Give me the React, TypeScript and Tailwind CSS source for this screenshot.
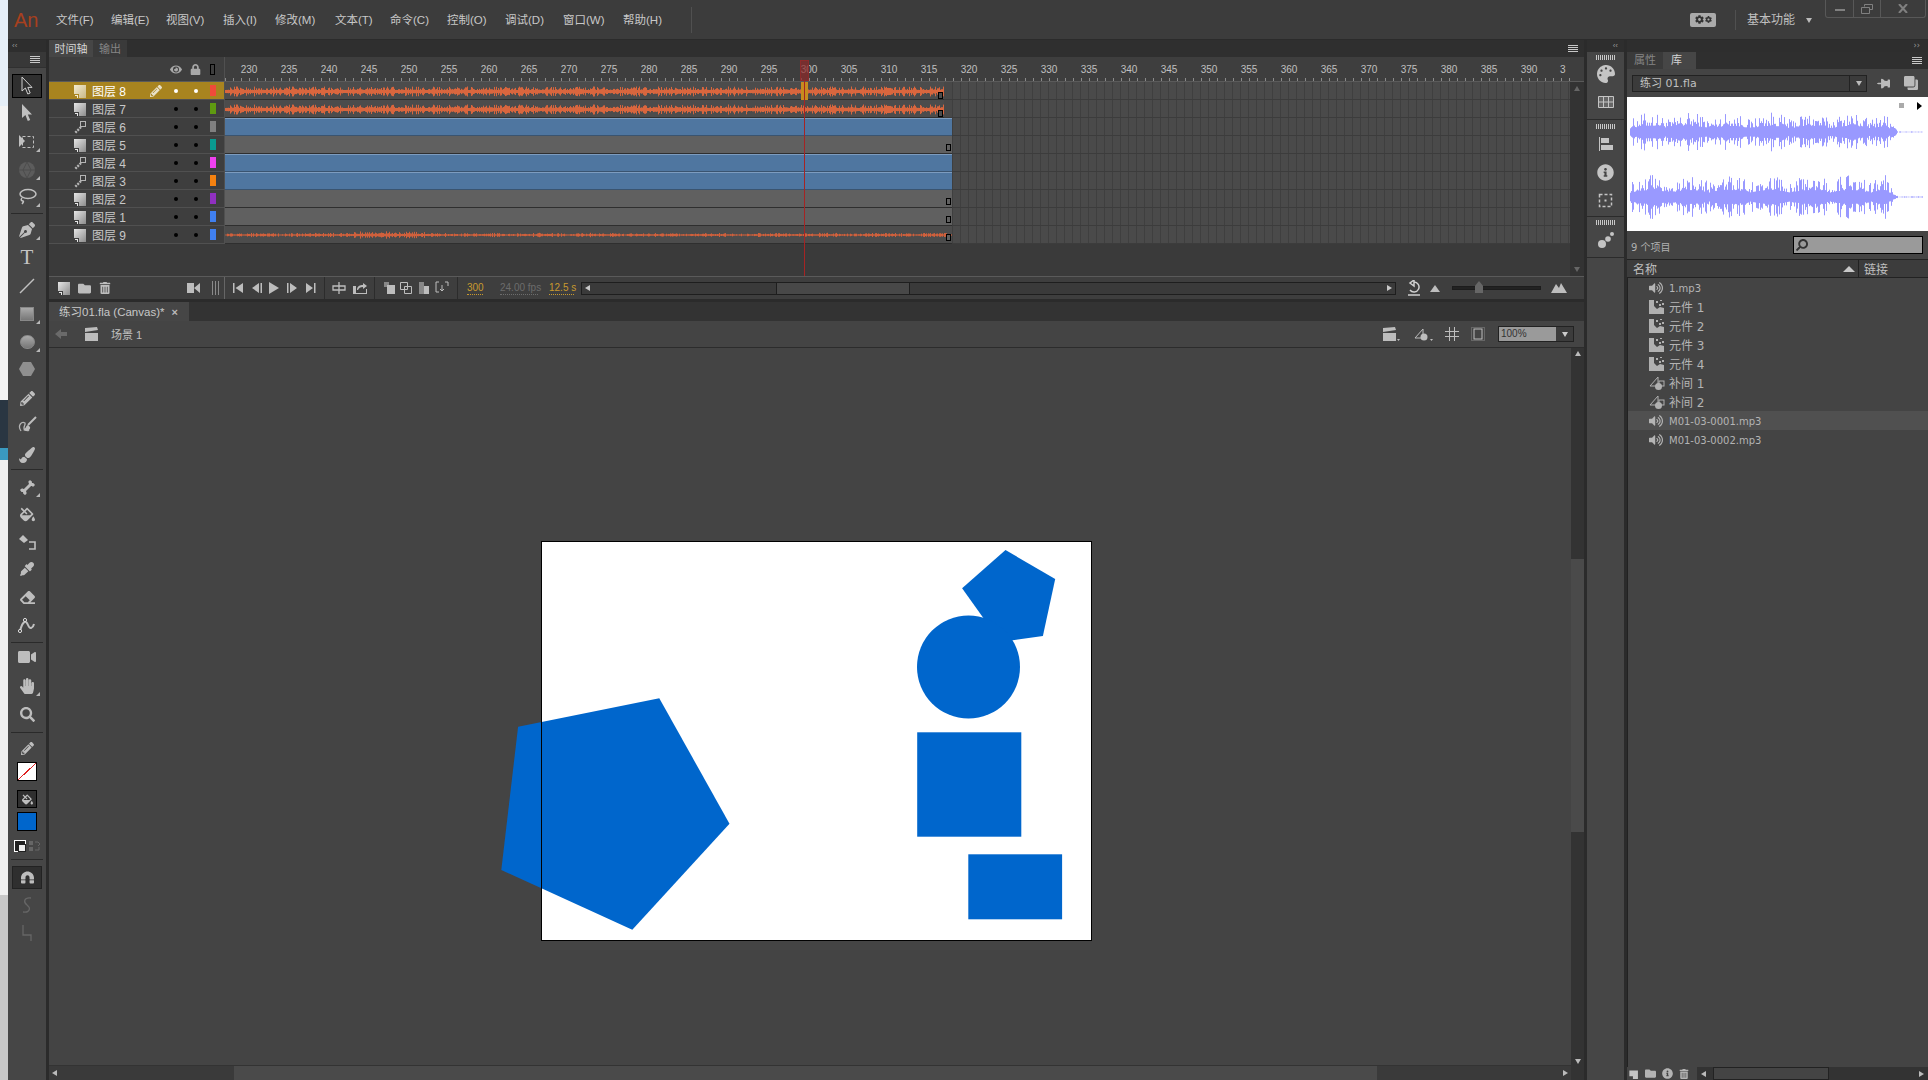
import type { ReactNode } from 'react';
import {
  FaBone,
  FaClone,
  FaCog,
  FaEraser,
  FaEye,
  FaEyeDropper,
  FaFillDrip,
  FaFolder,
  FaHandPaper,
  FaInfoCircle,
  FaLock,
  FaMagnet,
  FaPaintBrush,
  FaPalette,
  FaPenNib,
  FaPencilAlt,
  FaSearch,
  FaThumbtack,
  FaTrashAlt,
  FaVideo,
  FaVolumeUp,
} from 'react-icons/fa';

const MENUS = [
  ['文件(F)', 'w-[55px]'],
  ['编辑(E)', 'w-[55px]'],
  ['视图(V)', 'w-[57px]'],
  ['插入(I)', 'w-[52px]'],
  ['修改(M)', 'w-[60px]'],
  ['文本(T)', 'w-[55px]'],
  ['命令(C)', 'w-[57px]'],
  ['控制(O)', 'w-[58px]'],
  ['调试(D)', 'w-[58px]'],
  ['窗口(W)', 'w-[60px]'],
  ['帮助(H)', 'w-[55px]'],
];

const LAYERS = [
  { name: '图层 8', kind: 'layer', color: 'bg-[#f04a3a]', frames: 'wave', active: true },
  { name: '图层 7', kind: 'layer', color: 'bg-[#5f9a10]', frames: 'wave' },
  { name: '图层 6', kind: 'guide', color: 'bg-[#808080]', frames: 'blue' },
  { name: '图层 5', kind: 'layer', color: 'bg-[#0a9a90]', frames: 'gray' },
  { name: '图层 4', kind: 'guide', color: 'bg-[#f040f0]', frames: 'blue' },
  { name: '图层 3', kind: 'guide', color: 'bg-[#f58210]', frames: 'blue' },
  { name: '图层 2', kind: 'layer', color: 'bg-[#9030c0]', frames: 'gray' },
  { name: '图层 1', kind: 'layer', color: 'bg-[#4080f0]', frames: 'gray' },
  { name: '图层 9', kind: 'layer', color: 'bg-[#4080f0]', frames: 'thin' },
];

const LIBRARY = [
  { name: '1.mp3', kind: 'sound' },
  { name: '元件 1', kind: 'symbol' },
  { name: '元件 2', kind: 'symbol' },
  { name: '元件 3', kind: 'symbol' },
  { name: '元件 4', kind: 'symbol' },
  { name: '补间 1', kind: 'tween' },
  { name: '补间 2', kind: 'tween' },
  { name: 'M01-03-0001.mp3', kind: 'sound', selected: true },
  { name: 'M01-03-0002.mp3', kind: 'sound' },
];

const RULER: number[] = [];
for (let f = 230; f <= 390; f += 5) RULER.push(f);

// small seeded generator, so the wave forms stay the same on each render
function rng(seed: number) {
  let s = seed;
  return () => {
    s = (s * 16807) % 2147483647;
    return (s - 1) / 2147483646;
  };
}

function wavePath(
  width: number,
  mid: number,
  amp: number,
  seed: number,
  envelope: (t: number) => number,
) {
  const r = rng(seed);
  let d = '';
  for (let x = 0; x < width; x++) {
    const v = r();
    const h = amp * envelope(x / width) * (0.3 + 0.7 * v * v);
    d += `M${x + 0.5} ${(mid - h).toFixed(1)}V${(mid + h).toFixed(1)}`;
  }
  return d;
}

const songEnvelope = () => 1;
const thinEnvelope = (t: number) =>
  0.45 + 0.6 * Math.exp(-Math.pow((t - 0.22) * 16, 2)) + 0.25 * Math.abs(Math.sin(t * 40));
const previewEnvelope = (t: number) =>
  t > 0.915 ? 0.03 : t > 0.88 ? 0.7 * (0.915 - t) * 28 : 0.62 + 0.38 * Math.abs(Math.sin(t * 23));

const WAVE_A = wavePath(719, 9.5, 5, 77, songEnvelope);
const WAVE_THIN = wavePath(727, 9, 3.2, 913, thinEnvelope);
const PREVIEW_TOP = wavePath(293, 35, 20, 1234, previewEnvelope);
const PREVIEW_BOTTOM = wavePath(293, 100, 23, 4321, previewEnvelope);

function Tri({ className }: { className: string }) {
  return (
    <svg width="8" height="8" viewBox="0 0 8 8" className={className}>
      <path d="M1 2h6L4 7z" fill="currentColor" />
    </svg>
  );
}

function LayerIcon({ kind, active }: { kind: string; active?: boolean }) {
  if (kind === 'guide') {
    return (
      <svg width="13" height="14" viewBox="0 0 13 14" className="text-[#b4b4b4]">
        <rect x="6.5" y="1.5" width="5" height="5" fill="none" stroke="currentColor" />
        <path d="M7 7L1 13" stroke="currentColor" strokeWidth="2.4" strokeDasharray="2 1" />
      </svg>
    );
  }
  const top = active ? '#f4ecd0' : '#e6e6e6';
  const bottom = active ? '#c8b888' : '#8c8c8c';
  const id = active ? 'page-active' : 'page';
  return (
    <svg width="13" height="14" viewBox="0 0 13 14">
      <defs>
        <linearGradient id={id} x1="0" y1="0" x2="1" y2="1">
          <stop offset="0" stopColor={top} />
          <stop offset="1" stopColor={bottom} />
        </linearGradient>
      </defs>
      <path d="M0 1h12v13H5V10H0z" fill={`url(#${id})`} />
      <path d="M1 11h3v3H3v-2H1z" fill={top} />
    </svg>
  );
}

function SymbolIcon() {
  return (
    <svg width="15" height="15" viewBox="0 0 15 15">
      <path d="M0 1h5v6l3 3 3-2 4 1v6H0z" fill="#b0b0b0" />
      <path d="M7 2h2v2H7zM11 1h2v1h-2zM10 5h2v2h-2zM13 4h2v2h-2z" fill="#b0b0b0" />
    </svg>
  );
}

function TweenIcon() {
  return (
    <svg width="16" height="15" viewBox="0 0 16 15">
      <path d="M1 11L9 2v9z" fill="none" stroke="#b0b0b0" />
      <rect x="10" y="6" width="5" height="5" fill="none" stroke="#b0b0b0" />
      <circle cx="9.5" cy="11.5" r="3.5" fill="#b0b0b0" />
    </svg>
  );
}

function Corner() {
  return (
    <span className="absolute right-[6px] bottom-0 h-0 w-0 border-b-[4px] border-l-[4px] border-b-[#b8b8b8] border-l-transparent" />
  );
}

function Tool({
  children,
  className = '',
  corner,
}: {
  children: ReactNode;
  className?: string;
  corner?: boolean;
}) {
  return (
    <div className={`relative flex h-5 w-full items-center justify-center text-[#bdbdbd] ${className}`}>
      {children}
      {corner && <Corner />}
    </div>
  );
}

function Divider({ className }: { className: string }) {
  return <div className={`mx-[3px] h-px bg-[#2a2a2a] ${className}`} />;
}

function Toolbar() {
  return (
    <aside className="flex w-[38px] shrink-0 flex-col bg-[#464646]">
      <div className="flex h-[12px] items-center bg-[#2e2e2e] pl-[4px] text-[8px] leading-none text-[#999]">‹‹</div>
      <div className="flex h-[16px] items-center justify-end border-b border-[#303030] bg-[#383838] pr-[6px]">
        <Hamburger />
      </div>
      <div className="mx-[4px] mt-[6px] flex h-6 items-center justify-center border border-black bg-[#2f2f2f]">
        <svg width="16" height="20" viewBox="0 0 16 20">
          <path d="M3 1v14l3.4-3 2.4 6 2.4-1-2.4-5.6H13z" fill="none" stroke="#d0d0d0" />
        </svg>
      </div>
      <Tool className="mt-[5px]">
        <svg width="16" height="20" viewBox="0 0 16 20">
          <path d="M3 1v14l3.4-3 2.4 6 2.4-1-2.4-5.6H13z" fill="#c0c0c0" />
        </svg>
      </Tool>
      <Tool className="mt-[9px]" corner>
        <svg width="20" height="18" viewBox="0 0 20 18">
          <path d="M2 2v12l6-6z" fill="#c0c0c0" />
          <rect x="5.5" y="3.5" width="11" height="11" fill="none" stroke="#c0c0c0" strokeDasharray="3 2" />
        </svg>
      </Tool>
      <Tool className="mt-[8px]" corner>
        <svg width="20" height="20" viewBox="0 0 20 20">
          <circle cx="10" cy="10" r="8" fill="#5c5c5c" />
          <path d="M2 10h16M10 2l-4 8 4 8 4-8z" fill="none" stroke="#4c4c4c" />
        </svg>
      </Tool>
      <Tool className="mt-[7px]" corner>
        <svg width="20" height="20" viewBox="0 0 20 20">
          <ellipse cx="11" cy="7" rx="8" ry="4.5" fill="none" stroke="#c0c0c0" strokeWidth="1.5" />
          <path d="M5 11c-2 2 0 3 1 3s0 2-1 3" fill="none" stroke="#c0c0c0" strokeWidth="1.5" />
        </svg>
      </Tool>
      <Divider className="mt-[6px]" />
      <Tool className="mt-[6px]" corner>
        <FaPenNib size={16} />
      </Tool>
      <Tool className="mt-[7px]">
        <span className="text-[21px] leading-none text-[#c4c4c4] [font-family:'Liberation_Serif',serif]">T</span>
      </Tool>
      <Tool className="mt-[9px]">
        <svg width="16" height="16" viewBox="0 0 16 16">
          <path d="M1 15L15 1" stroke="#c0c0c0" strokeWidth="1.4" />
        </svg>
      </Tool>
      <Tool className="mt-[8px]" corner>
        <div className="h-[14px] w-[14px] border border-[#888] bg-gradient-to-b from-[#aaa] to-[#777]" />
      </Tool>
      <Tool className="mt-[8px]" corner>
        <div className="h-[14px] w-[15px] rounded-full border border-[#888] bg-gradient-to-b from-[#aaa] to-[#777]" />
      </Tool>
      <Tool className="mt-[7px]">
        <svg width="16" height="14" viewBox="0 0 16 14">
          <path d="M4 0h8l4 7-4 7H4L0 7z" fill="#8f8f8f" />
        </svg>
      </Tool>
      <Tool className="mt-[9px]">
        <FaPencilAlt size={15} />
      </Tool>
      <Tool className="mt-[7px]">
        <svg width="20" height="18" viewBox="0 0 20 18">
          <path d="M4 15C0 9 5 5 8 7c1 2-3 5 0 7 2 1 3 1 4 0" fill="none" stroke="#b4b4b4" strokeWidth="1.3" />
          <path d="M19 1l-8 8" stroke="#bdbdbd" strokeWidth="2" />
          <path d="M11 9c-2 0-2 4-5 5 3 2 8 0 7-3z" fill="#bdbdbd" />
        </svg>
      </Tool>
      <Tool className="mt-[10px]">
        <FaPaintBrush size={16} />
      </Tool>
      <Divider className="mt-[4px]" />
      <Tool className="mt-[7px]" corner>
        <FaBone size={15} className="-rotate-45" />
      </Tool>
      <Tool className="mt-[7px]">
        <FaFillDrip size={15} />
      </Tool>
      <Tool className="mt-[8px]">
        <svg width="20" height="18" viewBox="0 0 20 18">
          <path d="M2 6l4-4 5 5-4 3z" fill="#c0c0c0" />
          <path d="M12 9h6v7h-6" fill="none" stroke="#c0c0c0" strokeWidth="1.6" />
        </svg>
      </Tool>
      <Tool className="mt-[7px]">
        <FaEyeDropper size={14} />
      </Tool>
      <Tool className="mt-[8px]">
        <FaEraser size={15} />
      </Tool>
      <Tool className="mt-[8px]">
        <svg width="20" height="18" viewBox="0 0 20 18">
          <path d="M3 15C6 4 9 4 11 9s5 3 6-1" fill="none" stroke="#c0c0c0" strokeWidth="2" />
          <circle cx="3" cy="15" r="1.6" fill="#464646" stroke="#ddd" />
          <circle cx="8" cy="4" r="1.6" fill="#464646" stroke="#ddd" />
        </svg>
      </Tool>
      <Divider className="mt-[7px]" />
      <Tool className="mt-[4px]">
        <FaVideo size={18} />
      </Tool>
      <Tool className="mt-[9px]" corner>
        <FaHandPaper size={16} />
      </Tool>
      <Tool className="mt-[8px]">
        <FaSearch size={15} />
      </Tool>
      <Divider className="mt-[8px]" />
      <Tool className="mt-[5px]">
        <FaPencilAlt size={13} />
      </Tool>
      <div className="mx-[9px] mt-[4px] h-[19px] border border-black bg-white bg-[linear-gradient(to_top_left,transparent_48%,#e02020_48%,#e02020_52%,transparent_52%)]" />
      <div className="mx-[9px] mt-[9px] flex h-[18px] items-center justify-center border border-black bg-[#2f2f2f] text-[#bdbdbd]">
        <FaFillDrip size={11} />
      </div>
      <div className="mx-[9px] mt-[4px] h-[19px] border border-black bg-[#0066cc]" />
      <div className="mt-[7px] flex h-4 items-center justify-center gap-[3px]">
        <div className="relative h-3 w-3 border border-white bg-[#222]">
          <div className="absolute top-[3px] left-[3px] h-[8px] w-[8px] border border-[#222] bg-[#eee]" />
        </div>
        <svg width="12" height="12" viewBox="0 0 12 12">
          <path d="M0 1h4v4H0zM0 7h4v4H0z" fill="#666" />
          <path d="M6 2h3l2 2-2 2M6 10h4V7" fill="none" stroke="#666" />
        </svg>
      </div>
      <Divider className="mt-[5px]" />
      <div className="mx-[4px] mt-[6px] flex h-[23px] items-center justify-center border border-[#222] bg-[#2f2f2f] text-[#bdbdbd]">
        <FaMagnet size={13} className="rotate-180" />
      </div>
      <Tool className="mt-[6px]">
        <svg width="12" height="18" viewBox="0 0 12 18">
          <path d="M10 2C3 1 2 6 6 9s3 8-4 7" fill="none" stroke="#666" strokeWidth="1.3" />
        </svg>
      </Tool>
      <Tool className="mt-[8px]">
        <svg width="12" height="18" viewBox="0 0 12 18">
          <path d="M2 1v10h8v6" fill="none" stroke="#666" strokeWidth="1.3" />
        </svg>
      </Tool>
    </aside>
  );
}

function Hamburger() {
  return (
    <div className="flex w-[10px] flex-col gap-px">
      <div className="h-px bg-[#c8c8c8]" />
      <div className="h-px bg-[#c8c8c8]" />
      <div className="h-px bg-[#c8c8c8]" />
      <div className="h-px bg-[#c8c8c8]" />
    </div>
  );
}

function LayerRow({ layer }: { layer: (typeof LAYERS)[number] }) {
  const grayEnd = <div className="absolute top-[8px] right-[1px] h-[7px] w-[5px] border border-black bg-[#606060]" />;
  const waveEnd = <div className="absolute top-[10px] right-[1px] h-[7px] w-[5px] border border-black bg-[#4c4c4c]" />;
  return (
    <div className="flex h-[18px] text-[12px] text-[#c8c8c8]">
      <div
        className={`flex w-[175px] shrink-0 items-center border-b border-[#505050] ${
          layer.active ? 'bg-[#a8841f] text-white' : 'bg-[#3e3e3e]'
        }`}
      >
        <div className="ml-[25px] flex w-[18px] items-center">
          <LayerIcon kind={layer.kind} active={layer.active} />
        </div>
        <span className="w-[58px] pt-[2px] whitespace-nowrap">{layer.name}</span>
        <div className="w-[17px]">{layer.active && <FaPencilAlt size={12} className="text-[#e8e0c8]" />}</div>
        <div className="flex w-[18px] justify-center">
          <div className={`h-1 w-1 rounded-full ${layer.active ? 'bg-white' : 'bg-black'}`} />
        </div>
        <div className="flex w-[21px] justify-center">
          <div className={`h-1 w-1 rounded-full ${layer.active ? 'bg-white' : 'bg-black'}`} />
        </div>
        <div className={`ml-[4px] h-[11px] w-[6px] ${layer.color}`} />
      </div>
      <div className="w-px shrink-0 bg-[#505050]" />
      {layer.frames === 'blue' && (
        <div className="h-[18px] w-[727px] shrink-0 border-t border-b border-t-[#7d9cbf] border-b-[#3a5470] bg-[#4f76a0]" />
      )}
      {layer.frames === 'gray' && (
        <div className="relative h-[18px] w-[727px] shrink-0 border-b border-[#2f2f2f] bg-[#606060]">{grayEnd}</div>
      )}
      {layer.frames === 'wave' && (
        <div className="relative h-[18px] w-[719px] shrink-0 border-b border-[#2f2f2f] bg-[#4c4c4c]">
          <svg width="719" height="18" className="absolute top-0 left-0">
            <path d={WAVE_A} stroke="#d9663e" strokeWidth="1" />
          </svg>
          {waveEnd}
        </div>
      )}
      {layer.frames === 'thin' && (
        <div className="relative h-[18px] w-[727px] shrink-0 border-b border-[#2f2f2f] bg-[#4c4c4c]">
          <svg width="727" height="18" className="absolute top-0 left-0">
            <path d={WAVE_THIN} stroke="#d0603c" strokeWidth="1" />
          </svg>
          {grayEnd}
        </div>
      )}
      {layer.frames === 'wave' && (
        <div className="w-[8px] shrink-0 border-b border-[#3c3c3c] bg-[#484848]" />
      )}
      <div className="flex-1 border-b border-[#3c3c3c] bg-[#484848] bg-[repeating-linear-gradient(to_right,#3f3f3f_0,#3f3f3f_1px,#4a4a4a_1px,#4a4a4a_8px)]" />
    </div>
  );
}

function Slot({ children, className = '' }: { children: ReactNode; className?: string }) {
  return <div className={`flex w-4 shrink-0 items-center justify-center text-[#bdbdbd] ${className}`}>{children}</div>;
}

function Sep({ className }: { className: string }) {
  return <div className={`h-full w-px shrink-0 bg-[#2c2c2c] ${className}`} />;
}

function Transport({ d }: { d: string }) {
  return (
    <svg width="12" height="12" viewBox="0 0 12 12">
      <path d={d} fill="#bdbdbd" />
    </svg>
  );
}

function TimelineBar() {
  return (
    <div className="flex h-[23px] shrink-0 items-center border-t border-[#5a5a5a] bg-[#3e3e3e] text-[10px]">
      <Slot className="ml-[7px]">
        <LayerIcon kind="layer" />
      </Slot>
      <Slot className="ml-[4px]">
        <FaFolder size={13} />
      </Slot>
      <Slot className="ml-[5px]">
        <FaTrashAlt size={12} />
      </Slot>
      <Slot className="ml-[73px]">
        <svg width="14" height="12" viewBox="0 0 14 12">
          <path d="M0 1h7v10H0zM7 6l6-5v10z" fill="#bdbdbd" />
        </svg>
      </Slot>
      <Slot className="ml-[5px]">
        <svg width="9" height="14" viewBox="0 0 9 14">
          <path d="M1.5 0v14M4.5 0v14M7.5 0v14" stroke="#8a8a8a" />
        </svg>
      </Slot>
      <div className="ml-px h-full w-px shrink-0 bg-[#666]" />
      <Slot className="ml-[5px]">
        <Transport d="M1 1v10h1.500V1zM11 1L3.500 6l7.500 5z" />
      </Slot>
      <Slot className="ml-[3px]">
        <Transport d="M8 1L1 6l7 5zM9.500 1v10H11V1z" />
      </Slot>
      <Slot className="ml-px">
        <Transport d="M1 0l10 6-10 6z" />
      </Slot>
      <Slot className="ml-[2px]">
        <Transport d="M1 1v10h1.500V1zM4 1l7 5-7 5z" />
      </Slot>
      <Slot className="ml-[3px]">
        <Transport d="M1 1l7 5-7 5zM9 1v10h1.500V1z" />
      </Slot>
      <Sep className="ml-[5px]" />
      <Slot className="ml-[6px]">
        <svg width="14" height="14" viewBox="0 0 14 14">
          <path d="M7 1v12M1 5h12v4H1z" fill="none" stroke="#bdbdbd" strokeWidth="1.3" />
        </svg>
      </Slot>
      <Slot className="ml-[5px]">
        <svg width="16" height="14" viewBox="0 0 16 14">
          <path d="M1 5h3v7h10V8h1v5H1zM5 9c0-4 3-5 6-5V2l4 3-4 3V6c-3 0-4 1-5 3z" fill="#bdbdbd" />
        </svg>
      </Slot>
      <Sep className="ml-[6px]" />
      <Slot className="ml-[6px]">
        <svg width="14" height="14" viewBox="0 0 14 14">
          <path d="M2 1h5v5H2z" fill="#888" />
          <path d="M5 4h8v9H5z" fill="#bdbdbd" />
        </svg>
      </Slot>
      <Slot className="ml-px">
        <svg width="14" height="14" viewBox="0 0 14 14">
          <path d="M1.500 1.500h7v7h-7zM5.500 5.500h7v7h-7z" fill="none" stroke="#bdbdbd" />
        </svg>
      </Slot>
      <Slot className="ml-[2px]">
        <svg width="14" height="14" viewBox="0 0 14 14">
          <path d="M2 1h5v12H2z" fill="#888" />
          <path d="M7 5h5v8H7z" fill="#bdbdbd" />
        </svg>
      </Slot>
      <Slot className="ml-[2px]">
        <svg width="14" height="14" viewBox="0 0 14 14">
          <path d="M1 1h3M10 1h3v4M1 1v10h3M7 4v6M5 8l2 2 2-2" fill="none" stroke="#bdbdbd" />
        </svg>
      </Slot>
      <Sep className="ml-[7px]" />
      <span className="ml-[9px] w-[16px] shrink-0 border-b border-dotted border-[#c99a2e] leading-[12px] text-[#c99a2e]">300</span>
      <span className="ml-[17px] w-[38px] shrink-0 border-b border-dotted border-[#6c6c6c] leading-[12px] whitespace-nowrap text-[#6c6c6c]">24.00 fps</span>
      <span className="ml-[11px] w-[25px] shrink-0 border-b border-dotted border-[#c99a2e] leading-[12px] whitespace-nowrap text-[#c99a2e]">12.5 s</span>
      <div className="ml-[7px] flex h-[13px] w-[815px] shrink-0 items-center border border-[#1e1e1e] bg-[#3a3a3a]">
        <Tri className="ml-[2px] rotate-90 text-[#c8c8c8]" />
        <div className="ml-[184px] h-[13px] w-[134px] border border-[#1e1e1e] bg-[#484848]" />
        <Tri className="mr-[2px] ml-auto -rotate-90 text-[#c8c8c8]" />
      </div>
      <Slot className="ml-[10px]">
        <svg width="14" height="16" viewBox="0 0 14 16">
          <path d="M7 2a5 5 0 1 1-4 8M7 0L3 3l4 3zM1 15h12" fill="none" stroke="#d0d0d0" strokeWidth="1.5" />
        </svg>
      </Slot>
      <div className="ml-[6px] flex w-[14px] shrink-0 justify-center">
        <svg width="10" height="7" viewBox="0 0 10 7">
          <path d="M5 0l5 7H0z" fill="#bdbdbd" />
        </svg>
      </div>
      <div className="relative ml-[10px] h-[4px] w-[89px] shrink-0 border border-[#1c1c1c] bg-[#222]">
        <div className="absolute top-[-6px] left-[22px] h-[12px] w-[8px] bg-[#666] [clip-path:polygon(50%_0,100%_40%,100%_100%,0_100%,0_40%)]" />
      </div>
      <div className="ml-[8px] flex w-[20px] shrink-0 justify-center">
        <svg width="16" height="10" viewBox="0 0 16 10">
          <path d="M0 10L5 1l3 4 2-5 6 10z" fill="#bdbdbd" />
        </svg>
      </div>
    </div>
  );
}

function Timeline() {
  return (
    <section className="relative flex h-[259px] shrink-0 flex-col overflow-hidden bg-[#3a3a3a]">
      <div className="flex h-[17px] shrink-0 items-stretch bg-[#2f2f2f] text-[11px]">
        <div className="flex w-[44px] items-center justify-center bg-[#464646] pt-px text-[#d4d4d4]">时间轴</div>
        <div className="flex w-[34px] items-center justify-center bg-[#3a3a3a] pt-px text-[#858585]">输出</div>
        <div className="ml-auto flex items-center pr-[6px]">
          <Hamburger />
        </div>
      </div>
      <div className="flex h-[25px] shrink-0 border-b border-[#5a5a5a] bg-[#3e3e3e]">
        <div className="relative w-[176px] shrink-0 border-r border-[#505050]">
          <div className="flex h-full items-center pt-[1px] pl-[121px] text-[#a8a8a8]">
            <div className="flex w-[12px] justify-center">
              <FaEye size={13} />
            </div>
            <div className="ml-[7px] flex w-[12px] justify-center">
              <FaLock size={11} />
            </div>
            <div className="ml-[9px] h-[11px] w-[5px] border border-black" />
          </div>
        </div>
        <div className="relative w-[1345px] shrink-0 overflow-hidden">
          <div className="flex pt-[6px] pl-[4px] text-[10px] leading-[14px] text-[#c0c0c0] [font-family:'Liberation_Sans',sans-serif]">
            {RULER.map((f) => (
              <span key={f} className="w-[40px] shrink-0 text-center">
                {f}
              </span>
            ))}
            <span className="ml-[11px]">3</span>
          </div>
          <div className="absolute right-0 bottom-0 left-0 h-[3px] bg-[repeating-linear-gradient(to_right,#8a8a8a_0,#8a8a8a_1px,transparent_1px,transparent_8px)]" />
        </div>
      </div>
      <div className="flex min-h-0 flex-1">
        <div className="w-[1521px] shrink-0">
          {LAYERS.map((l) => (
            <LayerRow key={l.name} layer={l} />
          ))}
        </div>
        <div className="flex w-[14px] shrink-0 flex-col items-center justify-between bg-[#333] py-[3px] text-[#666]">
          <Tri className="rotate-180" />
          <Tri />
        </div>
      </div>
      <TimelineBar />
      {/* playhead sits above the frames */}
      <div className="absolute top-[20px] left-[751px] h-[21px] w-[9px] border border-[#8e2a2a] bg-[#8e2a2a]/70" />
      <div className="absolute top-[42px] left-[752px] h-[18px] w-[7px] bg-[#c78c1e]" />
      <div className="absolute top-[41px] left-[755px] h-[195px] w-px bg-[#a52424]" />
    </section>
  );
}

function Stage() {
  return (
    <div className="absolute top-[193px] left-[492px] h-[400px] w-[551px] bg-white">
      <svg width="551" height="400" viewBox="540.5 541 551 400" className="absolute top-0 left-0 overflow-visible">
        <g fill="#0066cc">
          <path d="M658.8 698.3L729 823.7 631.8 929.7 500.8 870 517.6 726.7z" />
          <path d="M1005 550L1054.7 579 1042.4 636 1000 642 961.6 588.3z" />
          <circle cx="968" cy="667" r="51.5" />
          <rect x="916.7" y="732.3" width="104.1" height="104.4" />
          <rect x="967.8" y="854.3" width="93.8" height="65" />
        </g>
      </svg>
      <div className="absolute inset-0 border border-black" />
    </div>
  );
}

function DocumentArea() {
  return (
    <section className="flex min-h-0 flex-1 flex-col">
      <div className="flex h-[19px] shrink-0 bg-[#333]">
        <div className="flex w-[140px] items-center bg-[#464646] pt-[2px] pl-[10px] text-[11.5px] whitespace-nowrap text-[#c8c8c8]">
          <span>练习01.fla (Canvas)*</span>
          <span className="ml-[7px] text-[11px] font-bold text-[#bbb]">×</span>
        </div>
      </div>
      <div className="flex h-[27px] shrink-0 items-center border-b border-[#2c2c2c] bg-[#444] text-[11px] text-[#c0c0c0]">
        <svg width="12" height="12" viewBox="0 0 12 12" className="ml-[6px]">
          <path d="M0 6l6-5v3h6v4H6v3z" fill="#6a6a6a" />
        </svg>
        <svg width="15" height="14" viewBox="0 0 15 14" className="ml-[17px]">
          <path d="M1 6h13v8H1zM1 1l12-1 1 3-13 2z" fill="#bdbdbd" />
        </svg>
        <span className="ml-[12px] pt-[2px] whitespace-nowrap">场景 1</span>
        <div className="mr-[10px] ml-auto flex items-center">
          <div className="flex w-[22px] items-center justify-center">
            <svg width="18" height="15" viewBox="0 0 18 15">
              <path d="M1 6h13v8H1zM1 1l12-1 1 3-13 2z" fill="#bdbdbd" />
              <path d="M15 12h3l-1.500 2z" fill="#bdbdbd" />
            </svg>
          </div>
          <div className="ml-[11px] flex w-[22px] items-center justify-center">
            <svg width="20" height="15" viewBox="0 0 20 15">
              <path d="M1 11L9 2v9z" fill="none" stroke="#bdbdbd" />
              <circle cx="10" cy="10" r="3.500" fill="#bdbdbd" />
              <path d="M16 12h3l-1.500 2z" fill="#bdbdbd" />
            </svg>
          </div>
          <div className="ml-[9px] flex w-[16px] items-center justify-center">
            <svg width="14" height="14" viewBox="0 0 14 14">
              <path d="M4.500 0v14M9.500 0v14M0 4.500h14M0 9.500h14" stroke="#bdbdbd" />
            </svg>
          </div>
          <div className="ml-[10px] flex w-[16px] items-center justify-center">
            <svg width="14" height="14" viewBox="0 0 14 14">
              <rect x="0.500" y="0.500" width="13" height="13" fill="none" stroke="#888" strokeDasharray="1 1" />
              <rect x="3" y="2" width="8" height="10" fill="none" stroke="#bdbdbd" />
            </svg>
          </div>
          <div className="ml-[12px] flex h-[16px] w-[76px] border border-[#222]">
            <div className="flex-1 bg-[#9a9a9a] pl-[2px] text-[10px] leading-[14px] text-[#333]">100%</div>
            <div className="flex w-[17px] items-center justify-center bg-[#3c3c3c] text-[#ccc]">
              <Tri className="" />
            </div>
          </div>
        </div>
      </div>
      <div className="relative flex min-h-0 flex-1 bg-[#444]">
        <Stage />
        <div className="relative min-w-0 flex-1">
          <div className="absolute right-0 bottom-0 left-0 flex h-[15px] items-center border-t border-[#333] bg-[#3a3a3a] text-[#bbb]">
            <Tri className="ml-[2px] rotate-90" />
            <div className="ml-[175px] h-[14px] w-[1143px] bg-[#4a4a4a]" />
            <Tri className="mr-[2px] ml-auto -rotate-90" />
          </div>
        </div>
        <div className="relative flex w-[13px] flex-col items-center justify-between bg-[#333] pt-[2px] pb-[15px] text-[#bbb]">
          <Tri className="rotate-180" />
          <div className="absolute top-[211px] h-[273px] w-full bg-[#4a4a4a]" />
          <Tri />
        </div>
      </div>
    </section>
  );
}

function Grip() {
  return <div className="mx-auto h-[5px] w-[20px] bg-[repeating-linear-gradient(to_right,#c8c8c8_0,#c8c8c8_1px,transparent_1px,transparent_2px)]" />;
}

function Dock() {
  return (
    <aside className="ml-[3px] flex w-[37px] shrink-0 flex-col bg-[#464646] text-[#c4c4c4]">
      <div className="flex h-[12px] items-center justify-end bg-[#2e2e2e] pr-[6px] text-[8px] leading-none text-[#999]">‹‹</div>
      <div className="flex h-[68px] flex-col items-center border-b border-[#2b2b2b] pt-[3px]">
        <Grip />
        <FaPalette size={18} className="mt-[5px]" />
        <svg width="16" height="12" viewBox="0 0 16 12" className="mt-[13px]">
          <path d="M0.500 0.500h15v11H0.500z" fill="#666" stroke="#c4c4c4" />
          <path d="M5.500 0v12M10.500 0v12M0 6h16" stroke="#c4c4c4" />
        </svg>
      </div>
      <div className="flex h-[97px] flex-col items-center border-b border-[#2b2b2b] pt-[4px]">
        <Grip />
        <svg width="14" height="14" viewBox="0 0 14 14" className="mt-[8px]">
          <path d="M0.500 0v14" stroke="#c4c4c4" />
          <path d="M2 1h8v5H2zM2 8h12v5H2z" fill="#c4c4c4" />
        </svg>
        <FaInfoCircle size={17} className="mt-[13px]" />
        <svg width="15" height="15" viewBox="0 0 15 15" className="mt-[12px]">
          <rect x="1.500" y="1.500" width="12" height="12" fill="none" stroke="#c4c4c4" strokeWidth="1.500" strokeDasharray="3 2" />
          <rect x="6.500" y="6.500" width="2" height="2" fill="#c4c4c4" />
        </svg>
      </div>
      <div className="flex h-[41px] flex-col items-center border-b border-[#2b2b2b] pt-[3px]">
        <Grip />
        <svg width="18" height="18" viewBox="0 0 18 18" className="mt-[6px]">
          <circle cx="5" cy="13" r="4" fill="#c4c4c4" />
          <circle cx="11" cy="8" r="2.800" fill="#c4c4c4" />
          <circle cx="15" cy="3" r="2" fill="#c4c4c4" />
        </svg>
      </div>
    </aside>
  );
}

function LibraryRowIcon({ kind }: { kind: string }) {
  if (kind === 'symbol') return <SymbolIcon />;
  if (kind === 'tween') return <TweenIcon />;
  return <FaVolumeUp size={14} className="text-[#b4b4b4]" />;
}

function LibraryPanel() {
  return (
    <aside className="ml-[3px] flex min-w-0 flex-1 flex-col bg-[#444] [font-family:'DejaVu_Sans','Noto_Sans_CJK_SC',sans-serif]">
      <div className="flex h-[12px] shrink-0 items-center justify-end bg-[#2e2e2e] pr-[8px] text-[8px] leading-none text-[#999]">››</div>
      <div className="flex h-[17px] shrink-0 bg-[#2f2f2f] text-[11px]">
        <div className="flex w-[36px] items-center justify-center bg-[#3a3a3a] pt-px text-[#858585]">属性</div>
        <div className="flex w-[33px] items-center justify-center bg-[#464646] pt-px pr-[6px] text-[#d4d4d4]">库</div>
        <div className="ml-auto flex items-center pr-[6px]">
          <Hamburger />
        </div>
      </div>
      <div className="flex h-[28px] shrink-0 items-center bg-[#444] pl-[5px]">
        <div className="flex h-[17px] w-[235px] items-center border border-[#222] bg-[#3b3b3b] text-[11px] text-[#c0c0c0]">
          <span className="w-[216px] pt-[2px] pl-[7px]">练习 01.fla</span>
          <div className="h-full w-px bg-[#222]" />
          <Tri className="ml-[5px] text-[#bbb]" />
        </div>
        <FaThumbtack size={13} className="ml-[10px] rotate-90 text-[#bbb]" />
        <FaClone size={14} className="ml-[14px] -scale-x-100 text-[#bbb]" />
      </div>
      <div className="relative h-[134px] shrink-0 bg-white">
        <svg width="293" height="134" className="absolute top-0 left-[3px]">
          <path d={PREVIEW_TOP} stroke="#9999ff" />
          <path d={PREVIEW_BOTTOM} stroke="#9999ff" />
        </svg>
        <div className="absolute top-[6px] left-[272px] h-[5px] w-[5px] bg-[#aaa]" />
        <div className="absolute top-[5px] left-[290px] h-0 w-0 border-t-[4px] border-b-[4px] border-l-[5px] border-t-transparent border-b-transparent border-l-black" />
      </div>
      <div className="flex h-[28px] shrink-0 items-center text-[10px] text-[#b0b0b0]">
        <span className="ml-[4px] w-[162px] pt-[4px]">9 个项目</span>
        <div className="flex h-[18px] w-[130px] items-center border border-black bg-[#9a9a9a] pl-[2px]">
          <FaSearch size={12} className="-scale-x-100 text-[#333]" />
        </div>
      </div>
      <div className="flex h-[19px] shrink-0 items-center border-t border-b border-[#222] bg-[#3c3c3c] text-[12px] text-[#c0c0c0]">
        <span className="ml-[6px] w-[210px] pt-[3px]">名称</span>
        <svg width="12" height="6" viewBox="0 0 12 6">
          <path d="M6 0l6 6H0z" fill="#c8c8c8" />
        </svg>
        <div className="ml-[3px] h-full w-px bg-[#222]" />
        <span className="ml-[5px] pt-[3px]">链接</span>
      </div>
      <div className="min-h-0 flex-1 border-l border-[#222] text-[#b4b4b4]">
        {LIBRARY.map((item) => (
          <div key={item.name} className={`flex h-[19px] items-center ${item.selected ? 'bg-[#505050]' : ''}`}>
            <div className="ml-[21px] flex w-[20px] items-center">
              <LibraryRowIcon kind={item.kind} />
            </div>
            <span className={`pt-[2px] ${item.kind === 'sound' ? 'text-[10px]' : 'text-[12px]'}`}>{item.name}</span>
          </div>
        ))}
      </div>
      <div className="flex h-[13px] shrink-0 items-center text-[#b4b4b4]">
        <div className="ml-[2px] flex w-[68px] shrink-0 items-center gap-[6px]">
          <LayerIconSmall />
          <FaFolder size={11} />
          <FaInfoCircle size={11} />
          <FaTrashAlt size={10} />
        </div>
        <div className="flex h-full flex-1 items-center bg-[#333]">
          <Tri className="ml-[3px] rotate-90 text-[#bbb]" />
          <div className="ml-[5px] h-full w-[116px] border border-[#222] bg-[#444]" />
          <Tri className="mr-[3px] ml-auto -rotate-90 text-[#bbb]" />
        </div>
      </div>
    </aside>
  );
}

function LayerIconSmall() {
  return (
    <svg width="10" height="10" viewBox="0 0 13 14">
      <path d="M0 2h12v12H5V10H0z" fill="#c4c4c4" />
    </svg>
  );
}

function TopBar() {
  return (
    <header className="flex h-[40px] shrink-0 items-center border-b border-[#2b2b2b] bg-[#3c3c3c]">
      <span className="ml-[6px] w-[33px] text-[20px] leading-none text-[#a8401e] [font-family:'Liberation_Sans',sans-serif]">An</span>
      <nav className="mt-[3px] ml-[9px] flex text-[11.5px] text-[#c8c8c8]">
        {MENUS.map(([label, width]) => (
          <span key={label} className={`whitespace-nowrap ${width}`}>
            {label}
          </span>
        ))}
      </nav>
      <div className="ml-[13px] h-[26px] w-px bg-[#505050]" />
      <div className="ml-[998px] flex h-[14px] w-[26px] items-center justify-center gap-px rounded-[2px] bg-[#aaa] text-[#333]">
        <FaCog size={9} />
        <FaCog size={7} />
      </div>
      <div className="ml-[19px] h-[20px] w-px bg-[#505050]" />
      <span className="mt-[1px] ml-[11px] w-[49px] text-[12px] whitespace-nowrap text-[#c0c0c0]">基本功能</span>
      <Tri className="ml-[9px] text-[#bbb]" />
      <div className="mb-auto ml-[12px] flex h-[18px] w-[101px] rounded-b-[3px] border border-t-0 border-[#585858] text-[#808080]">
        <div className="flex w-[28px] items-center justify-center border-r border-[#585858]">
          <div className="mt-[3px] h-[2px] w-[10px] bg-[#808080]" />
        </div>
        <div className="flex w-[27px] items-center justify-center border-r border-[#585858]">
          <svg width="12" height="10" viewBox="0 0 12 10">
            <path d="M3.500 2.500v-2h8v5h-3M0.500 3.500h8v6h-8z" fill="none" stroke="#808080" />
          </svg>
        </div>
        <div className="flex flex-1 items-center justify-center">
          <svg width="10" height="9" viewBox="0 0 10 9">
            <path d="M1 0l8 9M9 0L1 9" stroke="#808080" strokeWidth="2" />
          </svg>
        </div>
      </div>
    </header>
  );
}

function DesktopEdge() {
  // sliver of the window behind the application
  return (
    <div className="flex w-[8px] shrink-0 flex-col bg-[#f0f0f0]">
      <div className="h-[106px] bg-[#e6eff8]" />
      <div className="h-[294px] bg-[#f4f4f4]" />
      <div className="h-[60px] bg-[linear-gradient(to_top,#3a9ac0_0,#3a9ac0_12px,#2a3642_12px)]" />
      <div className="h-[435px]" />
      <div className="flex-1 bg-[#c8c8c8]" />
    </div>
  );
}

export default function App() {
  return (
    <div className="flex h-[1080px] w-[1928px] overflow-hidden bg-[#2b2b2b] [font-family:'Liberation_Sans','Noto_Sans_CJK_SC',sans-serif]">
      <DesktopEdge />
      <div className="flex min-w-0 flex-1 flex-col">
        <TopBar />
        <div className="flex min-h-0 flex-1">
          <Toolbar />
          <main className="ml-[3px] flex w-[1535px] shrink-0 flex-col gap-[3px]">
            <Timeline />
            <DocumentArea />
          </main>
          <Dock />
          <LibraryPanel />
        </div>
      </div>
    </div>
  );
}
